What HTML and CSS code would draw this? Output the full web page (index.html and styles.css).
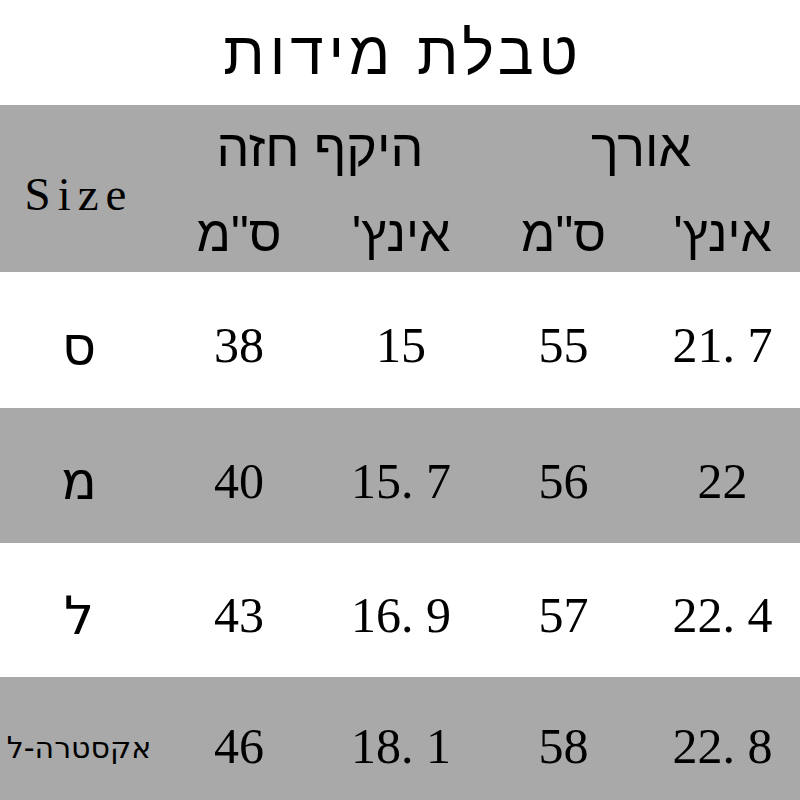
FILE: index.html
```html
<!DOCTYPE html>
<html lang="he">
<head>
<meta charset="utf-8">
<title>טבלת מידות</title>
<link rel="stylesheet" href="styles.css">
</head>
<body>
<div class="page">
  <h1 class="title" dir="rtl">טבלת מידות</h1>
  <div class="head">
    <div class="size-label">Size</div>
    <div class="group chest" dir="rtl">היקף חזה</div>
    <div class="group length" dir="rtl">אורך</div>
    <div class="unit" dir="rtl">ס"מ</div>
    <div class="unit" dir="rtl">אינץ'</div>
    <div class="unit" dir="rtl">ס"מ</div>
    <div class="unit" dir="rtl">אינץ'</div>
  </div>
  <div class="row light r1">
    <div class="sz" dir="rtl">ס</div>
    <div class="num">38</div>
    <div class="num">15</div>
    <div class="num">55</div>
    <div class="num">21<span class="dot">.</span>7</div>
  </div>
  <div class="row dark r2">
    <div class="sz" dir="rtl">מ</div>
    <div class="num">40</div>
    <div class="num">15<span class="dot">.</span>7</div>
    <div class="num">56</div>
    <div class="num">22</div>
  </div>
  <div class="row light r3">
    <div class="sz" dir="rtl">ל</div>
    <div class="num">43</div>
    <div class="num">16<span class="dot">.</span>9</div>
    <div class="num">57</div>
    <div class="num">22<span class="dot">.</span>4</div>
  </div>
  <div class="row dark r4">
    <div class="sz small" dir="rtl">אקסטרה-ל</div>
    <div class="num">46</div>
    <div class="num">18<span class="dot">.</span>1</div>
    <div class="num">58</div>
    <div class="num">22<span class="dot">.</span>8</div>
  </div>
</div>
</body>
</html>
```

FILE: styles.css
```css
html, body {
  margin: 0;
  padding: 0;
  background: #ffffff;
}
.page {
  width: 800px;
  height: 800px;
  overflow: hidden;
  color: #000;
}
.title {
  margin: 0;
  height: 105px;
  display: flex;
  align-items: center;
  justify-content: center;
  font-family: "Liberation Sans", "DejaVu Sans", sans-serif;
  font-weight: normal;
  font-size: 60px;
  letter-spacing: 5px;
  padding-top: 2px;
  padding-left: 6px;
  box-sizing: border-box;
}
.head {
  height: 167px;
  background: #a9a9a9;
  display: grid;
  grid-template-columns: 158px 162px 162px 163px 155px;
  grid-template-rows: 71px 96px;
}
.size-label {
  grid-row: 1 / span 2;
  grid-column: 1;
  display: flex;
  align-items: center;
  justify-content: center;
  font-family: "Liberation Serif", "DejaVu Serif", serif;
  font-size: 47px;
  letter-spacing: 7px;
  padding-top: 10px;
}
.group {
  display: flex;
  align-items: flex-end;
  justify-content: center;
  font-family: "Liberation Sans", "DejaVu Sans", sans-serif;
  font-size: 52px;
  line-height: 1;
  padding-bottom: 2px;
}
.chest { grid-column: 2 / span 2; }
.length { grid-column: 4 / span 2; }
.unit {
  display: flex;
  align-items: flex-end;
  justify-content: center;
  font-family: "Liberation Sans", "DejaVu Sans", sans-serif;
  font-size: 50px;
  line-height: 1;
  padding-bottom: 13px;
}
.row {
  display: grid;
  grid-template-columns: 158px 162px 162px 163px 155px;
  align-items: center;
}
.light { background: #ffffff; }
.dark { background: #a9a9a9; }
.r1 { height: 136px; }
.r2 { height: 135px; }
.r3 { height: 134px; }
.r4 { height: 128px; }
.row > div {
  display: flex;
  justify-content: center;
  padding-top: 10px;
}
.sz {
  font-family: "DejaVu Sans", "Liberation Sans", sans-serif;
  font-size: 53px;
  line-height: 1;
}
.sz.small {
  font-size: 30px;
  padding-top: 14px;
}
.num {
  font-family: "Liberation Serif", "DejaVu Serif", serif;
  font-size: 50px;
  line-height: 1;
}
.dot {
  display: inline-block;
  width: 25px;
}
```
